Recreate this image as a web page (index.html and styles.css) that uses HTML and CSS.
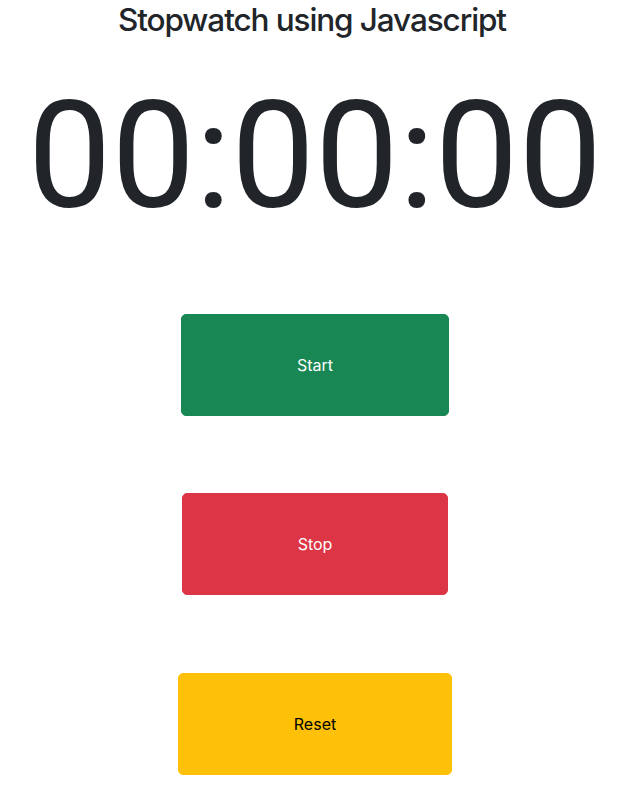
FILE: index.html
```html
<!DOCTYPE html>
<html lang="en">
<head>
<meta charset="utf-8">
<title>Stopwatch using Javascript</title>
<link rel="stylesheet" href="styles.css">
</head>
<body>
<main class="app">
  <h1 class="title">Stopwatch using Javascript</h1>
  <div class="timer" id="timer">00:00:00</div>
  <div class="controls">
    <button class="btn btn-start" type="button">Start</button>
    <button class="btn btn-stop" type="button">Stop</button>
    <button class="btn btn-reset" type="button">Reset</button>
  </div>
</main>
</body>
</html>
```
FILE: styles.css
```css
html, body {
  margin: 0;
  padding: 0;
  background: #fff;
}
body {
  font-family: Inter, "Liberation Sans", sans-serif;
  color: #212529;
}
.app {
  width: 630px;
  display: flex;
  flex-direction: column;
  align-items: center;
  text-align: center;
}
.title {
  font-size: 31.5px;
  font-weight: 500;
  line-height: 1.2;
  letter-spacing: -1.1px;
  margin: 1px 6px 0 0;
}
.timer {
  font-family: Roboto, Inter, sans-serif;
  font-size: 149px;
  font-weight: 400;
  line-height: 1;
  white-space: nowrap;
  margin-top: 43px;
}
.controls {
  display: flex;
  flex-direction: column;
  align-items: center;
  gap: 77.5px;
  margin-top: 83px;
}
.btn {
  font-family: inherit;
  font-size: 16px;
  font-weight: 400;
  line-height: 24px;
  padding: 38px 115px;
  border: 1px solid transparent;
  border-radius: 5px;
  cursor: pointer;
}
.btn-start {
  background: #198754;
  border-color: #198754;
  color: #fff;
}
.btn-stop {
  background: #dc3545;
  border-color: #dc3545;
  color: #fff;
}
.btn-reset {
  background: #ffc107;
  border-color: #ffc107;
  color: #000;
}
```
